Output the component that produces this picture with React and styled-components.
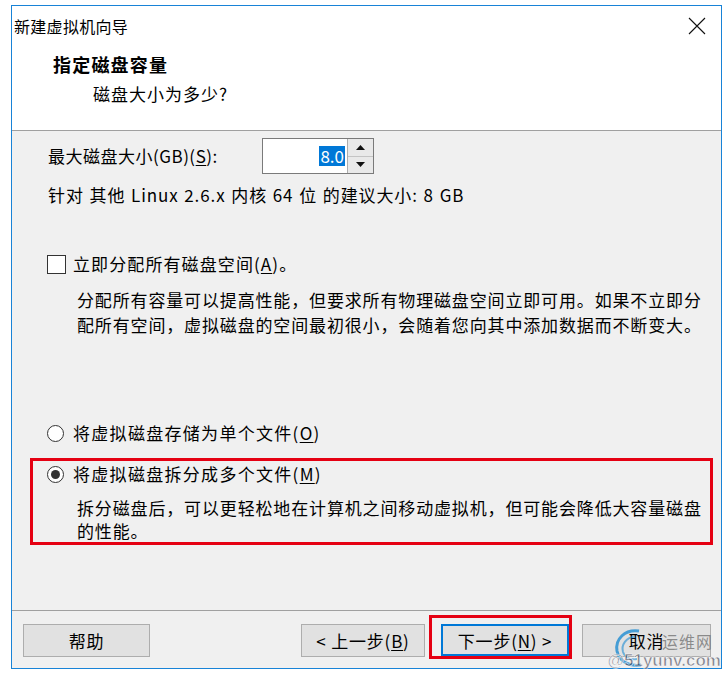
import styled, { createGlobalStyle } from "styled-components";

const GlobalStyle = createGlobalStyle`
  html, body {
    margin: 0;
    padding: 0;
    background: #ffffff;
  }
  body {
    font-family: "Noto Sans CJK SC", "Liberation Sans", sans-serif;
    color: #000;
  }
`;

const Page = styled.div`
  width: 727px;
  height: 677px;
  padding: 5px 5px 0 11px;
  box-sizing: border-box;
  position: relative;
  overflow: hidden;
`;

const Window = styled.div`
  width: 711px;
  height: 664px;
  box-sizing: border-box;
  border: 1px solid #1883d7;
  display: flex;
  flex-direction: column;
  background: #f0f0f0;
`;

const TitleBar = styled.div`
  height: 39px;
  background: #fff;
  display: flex;
  align-items: center;
  justify-content: space-between;
  padding: 0 15px 0 2px;
  font-size: 16px;
  line-height: 20px;
  letter-spacing: 0.3px;
`;

const Header = styled.div`
  height: 86px;
  background: #fff;
  border-bottom: 1px solid #a0a0a0;
  box-sizing: border-box;
  padding: 6px 0 0 41px;
`;

const HeaderTitle = styled.div`
  font-size: 18px;
  font-weight: bold;
  line-height: 26px;
  letter-spacing: 1.2px;
`;

const HeaderSub = styled.div`
  font-size: 17px;
  line-height: 22px;
  letter-spacing: 1px;
  margin: 6px 0 0 40px;
`;

const Body = styled.div`
  flex: 1;
  padding: 7px 0 0 36px;
  font-size: 17px;
  line-height: 20px;
  letter-spacing: 0.8px;
`;

const SizeRow = styled.div`
  display: flex;
  align-items: center;
  height: 36px;
`;

const SizeLabel = styled.div`
  width: 214px;
  letter-spacing: 0.5px;
`;

const SpinBox = styled.div`
  display: flex;
  height: 36px;
  width: 112px;
  box-sizing: border-box;
  border: 1px solid #7a7a7a;
  background: #fff;
`;

const SpinValue = styled.div`
  flex: 1;
  display: flex;
  align-items: center;
  justify-content: flex-end;
  padding-right: 2px;
  letter-spacing: 0;
`;

const Selected = styled.span`
  background: #0078d7;
  color: #fff;
  line-height: 20px;
  padding: 0 1px;
`;

const SpinButtons = styled.div`
  width: 25px;
  display: flex;
  flex-direction: column;
  border-left: 1px solid #adadad;
`;

const SpinButton = styled.div`
  flex: 1;
  background: #e9e9e9;
  display: flex;
  align-items: center;
  justify-content: center;
  border-top: ${(p) => (p.$bottom ? "1px solid #c4c4c4" : "none")};
`;

const Recommend = styled.div`
  margin-top: 11px;
  letter-spacing: 0.9px;
  word-spacing: 1px;
`;

const OptionRow = styled.div`
  display: flex;
  align-items: center;
  height: 20px;
  margin-top: ${(p) => p.$top || 0}px;
  letter-spacing: ${(p) => p.$ls || 0.8}px;
`;

const CheckBox = styled.div`
  width: 19px;
  height: 19px;
  box-sizing: border-box;
  border: 1px solid #333;
  background: #fff;
  margin: 0 7px 0 -1px;
`;

const Radio = styled.div`
  width: 17px;
  height: 17px;
  box-sizing: border-box;
  border: 1px solid #333;
  border-radius: 50%;
  background: #fff;
  margin: 0 9px 0 ${(p) => p.$left}px;
  display: flex;
  align-items: center;
  justify-content: center;
  &::after {
    content: "";
    display: ${(p) => (p.$checked ? "block" : "none")};
    width: 9px;
    height: 9px;
    border-radius: 50%;
    background: #333;
  }
`;

const Desc = styled.div`
  margin: ${(p) => p.$top}px 0 0 ${(p) => p.$left}px;
  line-height: ${(p) => p.$lh}px;
  letter-spacing: 0.85px;
  white-space: nowrap;
`;

const Highlight = styled.div`
  width: 683px;
  height: 87px;
  box-sizing: border-box;
  border: 3px solid #e50012;
  margin: 15px 0 0 -18px;
  padding-top: 3px;
`;

const Footer = styled.div`
  height: 58px;
  box-sizing: border-box;
  border-top: 1px solid #a0a0a0;
  display: flex;
  align-items: flex-start;
  padding: 4px 10px 0 11px;
`;

const Button = styled.div`
  width: ${(p) => p.$w || 127}px;
  height: 33px;
  box-sizing: border-box;
  margin-top: 9px;
  border: ${(p) => (p.$default ? "2px solid #0078d7" : "1px solid #adadad")};
  background: #e1e1e1;
  display: flex;
  align-items: center;
  justify-content: center;
  font-size: 17px;
  letter-spacing: 0.8px;
  margin-left: ${(p) => p.$gap || 0}px;
`;

const Spacer = styled.div`
  flex: 1;
`;

const RedWrap = styled.div`
  border: 3px solid #e50012;
  padding: 6px 0 0 9px;
  margin-left: 4px;
  height: 44px;
  box-sizing: border-box;
  & > div {
    margin-top: 0;
    height: 32px;
  }
`;

const U = styled.span`
  text-decoration: underline;
  text-underline-offset: 2px;
`;

const Watermark = styled.div`
  position: absolute;
  right: 6px;
  bottom: 6px;
  width: 110px;
  height: 46px;
  pointer-events: none;
`;

const WmTop = styled.div`
  position: absolute;
  right: 8px;
  top: 4px;
  font-size: 16px;
  color: rgba(110, 110, 110, 0.75);
  letter-spacing: 1px;
`;

const WmBottom = styled.div`
  position: absolute;
  right: 0;
  bottom: 0;
  font-family: "Liberation Sans", sans-serif;
  font-size: 17px;
  font-weight: bold;
  color: rgba(40, 40, 60, 0.55);
  -webkit-text-stroke: 0.6px rgba(255, 255, 255, 0.9);
`;

const Wizard = () => {
  return (
    <Window>
      <TitleBar>
        <span>新建虚拟机向导</span>
        <svg width="18" height="18" viewBox="0 0 18 18">
          <path d="M1 1 L17 17 M17 1 L1 17" stroke="#111" strokeWidth="1.1" />
        </svg>
      </TitleBar>
      <Header>
        <HeaderTitle>指定磁盘容量</HeaderTitle>
        <HeaderSub>磁盘大小为多少?</HeaderSub>
      </Header>
      <Body>
        <SizeRow>
          <SizeLabel>
            最大磁盘大小(GB)(<U>S</U>):
          </SizeLabel>
          <SpinBox>
            <SpinValue>
              <Selected>8.0</Selected>
            </SpinValue>
            <SpinButtons>
              <SpinButton>
                <svg width="9" height="5" viewBox="0 0 9 5">
                  <path d="M0 5 L4.5 0 L9 5 Z" fill="#111" />
                </svg>
              </SpinButton>
              <SpinButton $bottom>
                <svg width="9" height="5" viewBox="0 0 9 5">
                  <path d="M0 0 L9 0 L4.5 5 Z" fill="#111" />
                </svg>
              </SpinButton>
            </SpinButtons>
          </SpinBox>
        </SizeRow>
        <Recommend>针对 其他 Linux 2.6.x 内核 64 位 的建议大小: 8 GB</Recommend>
        <OptionRow $top={49} $ls={1.1}>
          <CheckBox />
          立即分配所有磁盘空间(<U>A</U>)。
        </OptionRow>
        <Desc $top={13} $left={29} $lh={25}>
          分配所有容量可以提高性能，但要求所有物理磁盘空间立即可用。如果不立即分
          <br />
          配所有空间，虚拟磁盘的空间最初很小，会随着您向其中添加数据而不断变大。
        </Desc>
        <OptionRow $top={86} $ls={1.3}>
          <Radio $left={-1} />
          将虚拟磁盘存储为单个文件(<U>O</U>)
        </OptionRow>
        <Highlight>
          <OptionRow $ls={1.3}>
            <Radio $left={14} $checked />
            将虚拟磁盘拆分成多个文件(<U>M</U>)
          </OptionRow>
          <Desc $top={12} $left={44} $lh={23}>
            拆分磁盘后，可以更轻松地在计算机之间移动虚拟机，但可能会降低大容量磁盘
            <br />
            的性能。
          </Desc>
        </Highlight>
      </Body>
      <Footer>
        <Button>帮助</Button>
        <Spacer />
        <Button $w={124}>
          &lt; 上一步(<U>B</U>)
        </Button>
        <RedWrap>
          <Button $default $w={128}>
            下一步(<U>N</U>) &gt;
          </Button>
        </RedWrap>
        <Button $gap={10} $w={129}>
          取消
        </Button>
      </Footer>
    </Window>
  );
};

export default function App() {
  return (
    <>
      <GlobalStyle />
      <Page>
        <Wizard />
        <Watermark>
          <svg width="34" height="46" viewBox="0 0 34 46" style={{ position: "absolute", left: 0, top: 0 }}>
            <path
              d="M28 6 C14 4 4 14 6 26 C8 36 18 42 30 40"
              stroke="rgba(30,140,210,0.8)"
              strokeWidth="3"
              fill="none"
            />
            <path
              d="M24 12 C15 12 10 20 12 27 C14 33 20 35 26 34"
              stroke="rgba(30,140,210,0.6)"
              strokeWidth="2"
              fill="none"
            />
          </svg>
          <WmTop>运维网</WmTop>
          <WmBottom>@51yunv.com</WmBottom>
        </Watermark>
      </Page>
    </>
  );
}
